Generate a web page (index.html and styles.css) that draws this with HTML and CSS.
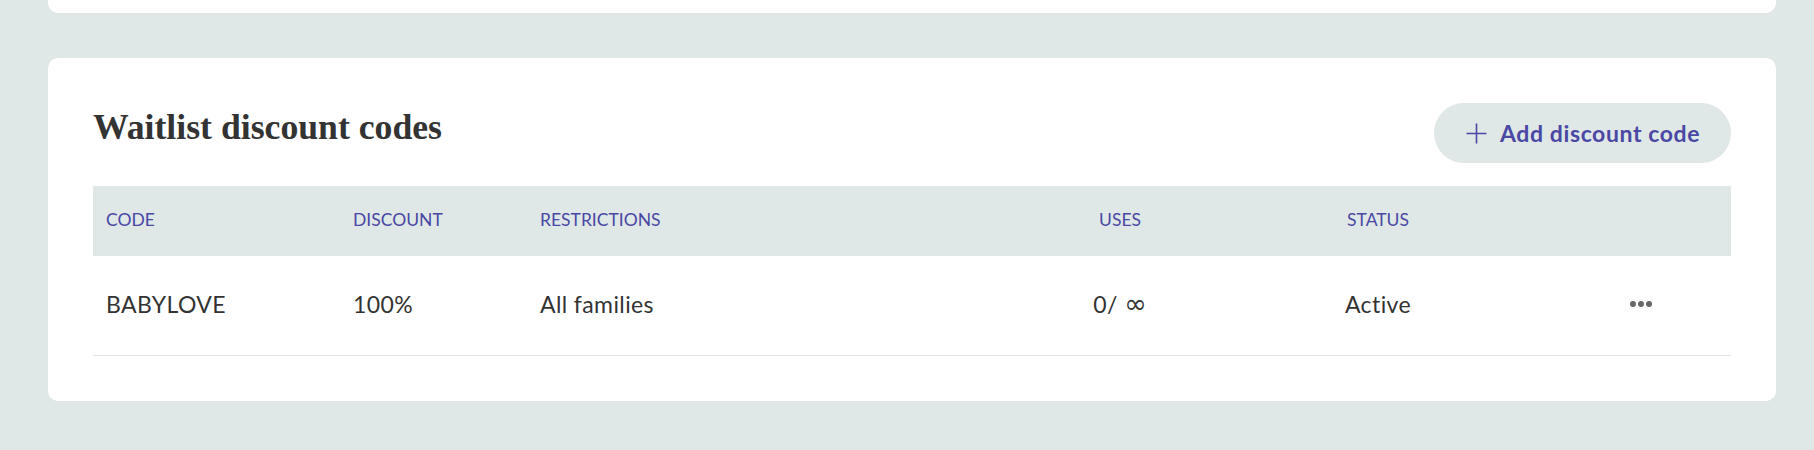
FILE: index.html
```html
<!DOCTYPE html>
<html lang="en">
<head>
<meta charset="utf-8">
<title>Waitlist discount codes</title>
<link rel="stylesheet" href="styles.css">
</head>
<body>
<div class="page">
  <div class="card card-prev"></div>
  <section class="card card-main">
    <div class="card-head">
      <h2 class="title">Waitlist discount codes</h2>
      <button class="btn-add" type="button">
        <svg class="plus" width="21" height="21" viewBox="0 0 21 21" aria-hidden="true">
          <path d="M10.5 0.5V20.5M0.5 10.5H20.5" stroke="currentColor" stroke-width="1.6" fill="none"/>
        </svg>
        <span>Add discount code</span>
      </button>
    </div>
    <div class="table">
      <div class="row row-head">
        <div class="cell">CODE</div>
        <div class="cell">DISCOUNT</div>
        <div class="cell">RESTRICTIONS</div>
        <div class="cell center">USES</div>
        <div class="cell center">STATUS</div>
        <div class="cell"></div>
      </div>
      <div class="row row-body">
        <div class="cell">BABYLOVE</div>
        <div class="cell">100%</div>
        <div class="cell">All families</div>
        <div class="cell center">0/ <span class="inf">∞</span></div>
        <div class="cell center">Active</div>
        <div class="cell menu"><span class="dots"><i></i><i></i><i></i></span></div>
      </div>
    </div>
  </section>
</div>
</body>
</html>
```

FILE: styles.css
```css
* { box-sizing: border-box; }
html, body { margin: 0; padding: 0; }
body {
  background: #dfe8e6;
  font-family: "Lato", "Liberation Sans", sans-serif;
  color: #333333;
  width: 1814px;
  height: 450px;
  overflow: hidden;
}
.page {
  padding: 0 38px 0 48px;
  display: flex;
  flex-direction: column;
  gap: 45px;
}
.card {
  background: #ffffff;
  border-radius: 10px;
}
.card-prev {
  height: 13px;
  border-radius: 0 0 10px 10px;
}
.card-main {
  padding: 45px;
}
.card-head {
  display: flex;
  justify-content: space-between;
  align-items: flex-start;
  margin-bottom: 23px;
}
.title {
  margin: 0;
  padding-top: 3px;
  font-family: "Liberation Serif", serif;
  font-weight: 700;
  font-size: 35.7px;
  line-height: 42px;
  color: #333333;
}
.btn-add {
  height: 60px;
  width: 297px;
  border: 0;
  border-radius: 30px;
  background: #dfe8e6;
  color: #4a47a5;
  display: flex;
  align-items: center;
  gap: 13px;
  padding: 0 0 0 32px;
  font-family: "Lato", "Liberation Sans", sans-serif;
  font-weight: 700;
  font-size: 23px;
  letter-spacing: 0.6px;
}
.plus { display: block; flex: none; }
.table { display: flex; flex-direction: column; }
.row {
  display: grid;
  grid-template-columns: 247px 187px 473px 240px 276px 215px;
  align-items: center;
}
.row-head {
  height: 70px;
  padding-bottom: 3px;
  background: #dfe8e6;
  color: #4a47a5;
  font-size: 17.5px;
}
.row-body {
  height: 100px;
  padding-bottom: 4px;
  border-bottom: 1px solid #e4e4e4;
  font-size: 23px;
  letter-spacing: 0.4px;
  color: #333333;
}
.cell { padding-left: 13px; }
.cell.center { padding-left: 0; text-align: center; }
.inf {
  font-family: "DejaVu Sans", sans-serif;
  font-size: 27px;
  letter-spacing: 0;
  line-height: 1;
}
.menu { display: flex; justify-content: center; padding-left: 35px; }
.dots { display: flex; gap: 2px; }
.dots i {
  display: block;
  width: 6px;
  height: 6px;
  border-radius: 50%;
  background: #666666;
}
```
